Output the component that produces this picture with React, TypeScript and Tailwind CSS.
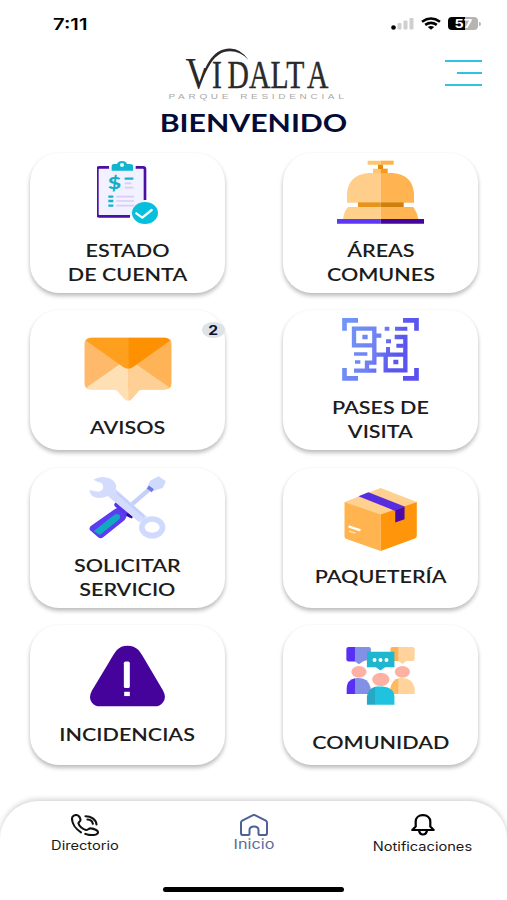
import type { ReactNode } from "react";
import clsx from "clsx";

interface Tile {
  id: string;
  lines: string[];
  icon: ReactNode;
  pad: string;
  gap: string;
  badge?: number;
}

function StatementIcon() {
  return (
    <svg width="62" height="63" viewBox="232 48 186 189" fill="none">
      <rect x="233" y="67" width="144" height="147" rx="6" fill="#f1f1ff" />
      <path d="M268 67h-29q-6 0-6 6v135q0 6 6 6h92M348 67h22q6 0 6 6v92" stroke="#4a0fa3" strokeWidth="8" />
      <path d="M276 77V63q0-6 7-6h9q3-9 15-9t15 9h9q9 0 9 6v14z" fill="#10b6cf" />
      <circle cx="307" cy="60" r="6" fill="#e6fbff" />
      <text x="264" y="133" fontFamily="Lato, sans-serif" fontWeight="900" fontSize="50" textLength="40" lengthAdjust="spacingAndGlyphs" fill="#12afc8">$</text>
      <path d="M315 101h26M266 155h15M266 168h15M266 182h15" stroke="#14b3cd" strokeWidth="7" />
      <path d="M315 115h20M315 128h26M290 155h53M290 168h53M290 182h53" stroke="#d9cdf5" strokeWidth="5" />
      <ellipse cx="376" cy="204" rx="39" ry="33" fill="#06bfdc" />
      <path d="M350 205l18 13 28-23" stroke="#fff" strokeWidth="7" strokeLinecap="round" strokeLinejoin="round" />
    </svg>
  );
}

function BellDeskIcon() {
  return (
    <svg width="87" height="64" viewBox="186 46 261 192">
      <path d="M278 48h39v12h-39zM294 72h23v16h-23z" fill="#ffc56f" />
      <path d="M317 48h39v12h-39z" fill="#ffb247" />
      <path d="M317 72h21v16h-21z" fill="#f59a1b" />
      <path d="M309 60h15v13h-15z" fill="#e58a0b" />
      <path d="M317 85h-36q-62 6-65 62v27h101z" fill="#ffce8a" />
      <path d="M317 85h36q61 6 64 62v27H317z" fill="#ffb351" />
      <path d="M249 173h68v14h-68z" fill="#e8931b" />
      <path d="M317 173h69v14h-69z" fill="#cf7f0b" />
      <path d="M219 187h98v36H204q3-24 15-36z" fill="#ffcf8c" />
      <path d="M317 187h98q11 15 15 36H317z" fill="#ffb554" />
      <path d="M186 223h131v14H186z" fill="#5c37f4" />
      <path d="M317 223h130v14H317z" fill="#44069b" />
    </svg>
  );
}

function EnvelopeIcon() {
  return (
    <svg width="88" height="64" viewBox="191 98 263 192">
      <path d="M192 119q0-19 19-19h112v155H211q-19 0-19-19z" fill="#ffb96a" />
      <path d="M323 100h111q19 0 19 19v117q0 19-19 19H323z" fill="#ffb357" />
      <path d="M199 249l104-73 20-6v119q-7 0-12-6l-21-23q-4-4-10-4h-67q-8 0-14-7z" fill="#ffdfb4" />
      <path d="M446 249l-104-73-19-6v119q7 0 12-6l20-23q4-4 10-4h67q8 0 14-7z" fill="#ffd095" />
      <path d="M197 109q5-9 16-9h110v93q-8 0-15-5z" fill="#ff9f1e" />
      <path d="M448 109q-5-9-16-9H323v93q8 0 15-5z" fill="#fd9102" />
    </svg>
  );
}

function QrIcon() {
  return (
    <svg width="77" height="63" viewBox="201 40 231 189" fill="none" stroke="url(#qr)" strokeWidth="13">
      <defs>
        <linearGradient id="qr" gradientUnits="userSpaceOnUse" x1="201" y1="80" x2="432" y2="170">
          <stop offset="0" stopColor="#7196f8" />
          <stop offset=".45" stopColor="#6f80f4" />
          <stop offset=".7" stopColor="#5b57ee" />
          <stop offset="1" stopColor="#5a50f0" />
        </linearGradient>
      </defs>
      <path d="M208.500 78V47H249M384 47h40.500v31M208.500 190v31H249M384 221h40.500v-31" strokeWidth="14" />
      <path d="M237 72h61v50h-61zM298 93h21M298 116v58h-22v22M237 198h67" />
      <path d="M237 148h40M240 172h16" strokeWidth="11" />
      <path d="M298 150h94M332 150v47h59v-47M391 203V97h-32" />
      <path d="M360 72h37M329 72h14M333 110h15M339 127v22M364 123h22" strokeWidth="12" />
      <path d="M262 97h16M355 172h15" />
    </svg>
  );
}

function ToolsIcon() {
  return (
    <svg width="77" height="63" viewBox="207 46 230 189" fill="none">
      <path d="M325 140l62-54" stroke="#c5d1fb" strokeWidth="13" />
      <path d="M382 78l8-18 25-13 22 15-9 20-28 8z" fill="#cedafc" />
      <path d="M383 79l15 11" stroke="#6d78e5" strokeWidth="11" />
      {/* handle */}
      <path d="M209 208q-3-8 4-13l66-46q10-8 22-10l20 18q-2 18-12 25l-60 48q-8 6-15 0z" fill="#5d3bf3" />
      <path d="M221 211l57-45q11-11 20-3 6 7-4 16l-55 44z" fill="#0faabf" />
      <path d="M290 132l40 31" stroke="#5734e5" strokeWidth="15" strokeLinecap="round" />
      <path d="M320 160l18 8" stroke="#34069a" strokeWidth="12" />
      {/* wrench */}
      <path d="M219 57q25-15 52-3 21 12 16 32l93 82-23 17-94-79q-23 10-41 3-14-7-14-21l27 5q15-3 14-16-2-11-13-12z" fill="#d3dcfd" />
      <path d="M290 96l82 72" stroke="#c3cffb" strokeWidth="6" />
      <ellipse cx="396" cy="200" rx="31" ry="25" stroke="#d0dafd" strokeWidth="17" />
    </svg>
  );
}

function ParcelIcon() {
  return (
    <svg width="73" height="63" viewBox="207 83 219 190">
      <path d="M208 125l109-42 109 42-109 40z" fill="#ffd08f" />
      <path d="M208 125l109 38v110l-103-36q-6-2-6-8z" fill="#ffb44f" />
      <path d="M426 125l-109 38v110l103-38q6-2 6-8z" fill="#ff950a" />
      <path d="M250 108l30-12 109 43-28 13z" fill="#582cdf" />
      <path d="M361 151l28-12v38l-28 10z" fill="#4a0aa6" />
      <path d="M220 199l36 12" stroke="#fff" strokeWidth="7" />
      <path d="M221 213l20 6" stroke="#ffe4bd" strokeWidth="4" />
    </svg>
  );
}

function WarningIcon() {
  return (
    <svg width="75" height="62" viewBox="209 77 226 185">
      <path d="M290 91q12-13 32-13t33 13q8 9 26 41l48 81q12 22-1 37-8 11-24 11H239q-16 0-24-11-12-15 0-37l49-81q18-32 26-41z" fill="#45039b" />
      <rect x="311" y="126" width="18" height="80" rx="5" fill="#fff" />
      <rect x="312" y="217" width="17" height="13" fill="#fff" />
    </svg>
  );
}

function CommunityIcon() {
  return (
    <svg width="69" height="58" viewBox="213 82 206 175">
      <path d="M213 88q0-6 7-6h19v44h-19q-7 0-7-6z" fill="#592ff3" />
      <path d="M239 82h42q6 0 6 6v34h-14l-10 4-12 8-12-8z" fill="#8290e6" />
      <path d="M346 88q0-6 6-6h19v42h-12l-13-3z" fill="#ffb24f" />
      <path d="M371 82h41q7 0 7 6v30q0 6-7 6h-18l-12 9-11-8z" fill="#ffd39b" />
      <ellipse cx="251" cy="157" rx="23" ry="18" fill="#fdb1a3" />
      <ellipse cx="382" cy="157" rx="23" ry="18" fill="#fdb1a3" />
      <path d="M239 176q-25 5-25 31v17h25z" fill="#592ff3" />
      <path d="M239 176q40-4 47 28v20h-47z" fill="#8290e6" />
      <path d="M371 176q-19 4-25 28v20h25z" fill="#ffb95f" />
      <path d="M371 176q42-3 48 29v19h-48z" fill="#ffd39b" />
      <path d="M275 96h83v47h-28l-14 10-14-10h-27z" fill="#1eb7cf" />
      <circle cx="298" cy="121" r="6" fill="#fff" />
      <circle cx="316" cy="121" r="6" fill="#fff" />
      <circle cx="334" cy="121" r="6" fill="#fff" />
      <ellipse cx="317" cy="180" rx="28" ry="22" fill="#fff" />
      <ellipse cx="317" cy="180" rx="26" ry="20" fill="#fdb1a3" />
      <path d="M302 201q-27 6-27 32v23h27z" fill="#27a9c6" />
      <path d="M302 201h20q36 3 36 32v23h-56z" fill="#1fc3df" />
    </svg>
  );
}

const tiles: Tile[] = [
  { id: "estado", lines: ["ESTADO", "DE CUENTA"], icon: <StatementIcon />, pad: "pt-[8px]", gap: "mt-[15px]" },
  { id: "areas", lines: ["ÁREAS", "COMUNES"], icon: <BellDeskIcon />, pad: "pt-[7px]", gap: "mt-[15px]" },
  { id: "avisos", lines: ["AVISOS"], icon: <EnvelopeIcon />, pad: "pt-[27px]", gap: "mt-[15px]", badge: 2 },
  { id: "pases", lines: ["PASES DE", "VISITA"], icon: <QrIcon />, pad: "pt-[8px]", gap: "mt-[15px]" },
  { id: "servicio", lines: ["SOLICITAR", "SERVICIO"], icon: <ToolsIcon />, pad: "pt-[8px]", gap: "mt-[15px]" },
  { id: "paqueteria", lines: ["PAQUETERÍA"], icon: <ParcelIcon />, pad: "pt-[20px]", gap: "mt-[14px]" },
  { id: "incidencias", lines: ["INCIDENCIAS"], icon: <WarningIcon />, pad: "pt-[20px]", gap: "mt-[16px]" },
  { id: "comunidad", lines: ["COMUNIDAD"], icon: <CommunityIcon />, pad: "pt-[22px]", gap: "mt-[26px]" },
];

function StatusBar() {
  return (
    <div className="flex h-[47px] items-center justify-between pr-[26px] pl-[53px]">
      <span className="origin-left scale-x-[1.26] font-['Inter',sans-serif] text-[16px] leading-none font-semibold text-black">
        7:11
      </span>
      <div className="flex items-center gap-[7px]">
        <svg width="23" height="13" viewBox="0 0 23 13">
          <circle cx="2.5" cy="10.5" r="2.3" />
          <g fill="#cfcfcf">
            <rect x="6.5" y="6" width="4" height="6.5" rx="1" />
            <rect x="12.5" y="3.5" width="4" height="9" rx="1" />
            <rect x="18.5" y="1" width="4" height="11.5" rx="1" />
          </g>
        </svg>
        <svg width="20" height="13" viewBox="0 0 20 13" fill="none" stroke="#000" strokeWidth="2.6">
          <path d="M1 4.700Q10-1.700 19 4.700M4.200 7.900q5.800-4.200 11.600 0" />
          <path d="M6.800 10q3.200-2.200 6.400 0L10 12.700z" fill="#000" stroke="none" />
        </svg>
        <div className="flex items-center gap-px">
          <div className="flex h-[13px] w-[30px] items-center justify-center rounded-[4px] bg-linear-to-r from-black from-57% to-[#b4b4b4] to-57% font-['Inter',sans-serif] text-[12px] leading-none font-bold text-white">
            <span className="scale-x-[1.2]">57</span>
          </div>
          <div className="h-[4px] w-[2px] rounded-r-full bg-[#b4b4b4]" />
        </div>
      </div>
    </div>
  );
}

function Logo() {
  return (
    <svg width="187" height="54" viewBox="160 47 187 54" fontFamily="'Liberation Serif', serif" fill="#2a2a2a">
      <clipPath id="v-arm">
        <path d="M180 50h20v18h9L200 92h-20z" />
      </clipPath>
      <text x="185.500" y="88" fontSize="44" textLength="26" lengthAdjust="spacingAndGlyphs" clipPath="url(#v-arm)">V</text>
      <path d="M198 87C204.500 69 211 48.500 230 48.500q11 0 18.500 11.500Q241 51.200 230 51.200C213 51.200 207 70 199.300 87z" />
      <g transform="translate(212 88) scale(.76 1)">
        <text x="0 20.400 48.700 77 97.700 125" y="0" fontSize="39" stroke="#2a2a2a" strokeWidth=".4">
          IDALTA
        </text>
      </g>
      <text x="168.500" y="99.300" fontFamily="'Liberation Sans', sans-serif" fontSize="6.500" letterSpacing="2.400" wordSpacing="1" textLength="179" lengthAdjust="spacingAndGlyphs" fill="#a9a9a9">
        PARQUE RESIDENCIAL
      </text>
    </svg>
  );
}

function TileCard({ tile }: { tile: Tile }) {
  return (
    <button
      type="button"
      className={clsx(
        "relative flex h-[140px] w-[195px] flex-col items-center rounded-[29px] bg-white shadow-[0_3px_4px_rgba(0,0,0,0.24),0_1px_4px_rgba(0,0,0,0.05)]",
        tile.pad
      )}
    >
      {tile.icon}
      <span
        className={clsx(
          "scale-x-[1.23] font-['Lato',sans-serif] text-[17.500px] leading-[24px] font-semibold whitespace-nowrap text-[#1c1c1c]",
          tile.gap
        )}
      >
        {tile.lines.map((line) => (
          <span key={line} className="block">
            {line}
          </span>
        ))}
      </span>
      {tile.badge && (
        <span className="absolute top-[12px] right-0 flex h-[16px] w-[23px] items-center justify-center rounded-[50%] bg-[#dfe3e6] font-['Inter',sans-serif] text-[13px] leading-none font-bold text-[#0c1338]">
          <span className="scale-x-[1.2]">{tile.badge}</span>
        </span>
      )}
    </button>
  );
}

function BottomNav() {
  return (
    <nav className="flex h-[99px] flex-col rounded-t-[38px] bg-white shadow-[0_-2px_5px_rgba(0,0,0,0.17)]">
      <div className="grid h-[86px] grid-cols-3 font-['Inter',sans-serif] text-[12.500px] leading-[16px] text-[#1a1a1a]">
        <a className="flex flex-col items-center pt-[13px]">
          <svg width="28" height="22" viewBox="0 0 28 22" fill="none" stroke="#111" strokeWidth="2.1" strokeLinecap="round" strokeLinejoin="round">
            <path d="M10 18.300C5 15.200 1 9.800 1 4.700 1 2.500 3 1 5.200 1 7.700 1 9.500 4 9.500 6c0 1.500-2.300 2.300-2 3.500.6 2.500 4.300 6 7.500 6.500 2 .3 2.500-2 5-1.600 3 .4 7 2 7 3.800 0 2.200-4 2.900-6.500 2.900-2.200 0-4.200-.4-6.200-1.200" />
            <path d="M14.500 2.200c5.500 0 10.500 3.300 11 8.300M16.500 5.500c2.800.2 5 1.800 5.300 4.300" />
          </svg>
          <span className="mt-[2px] scale-x-[1.17]">Directorio</span>
        </a>
        <a className="flex flex-col items-center pt-[13px] text-[13.500px] text-[#5a6b9c]">
          <svg width="28" height="22" viewBox="0 0 28 22" fill="none" stroke="#4f6296" strokeWidth="2" strokeLinejoin="round">
            <path d="M1 8.500Q1 7.300 2.200 6.600L12.600 1.300q1.400-.7 2.800 0l10.400 5.300Q27 7.300 27 8.500v10.700q0 1.800-2 1.800h-5.500q-1 0-1-1v-4c0-2.300-2-3.600-4.500-3.600s-4.500 1.300-4.500 3.600v4q0 1-1 1H3q-2 0-2-1.800z" />
          </svg>
          <span className="scale-x-[1.2]">Inicio</span>
        </a>
        <a className="flex flex-col items-center pt-[13px]">
          <svg width="24" height="22" viewBox="0 0 24 22" fill="none" stroke="#000" strokeWidth="2.2" strokeLinejoin="round">
            <path d="M12 1.200C7.500 1.200 4.700 3.800 4.700 7.500v5L1.300 16h21.400l-3.400-3.500v-5C19.300 3.800 16.500 1.200 12 1.200z" />
            <path d="M8 16.500c.5 2.700 2 4 4 4s3.500-1.300 4-4" />
          </svg>
          <span className="mt-[3px] scale-x-[1.17]">Notificaciones</span>
        </a>
      </div>
      <div className="mx-auto h-[5px] w-[181px] rounded-full bg-black" />
    </nav>
  );
}

export default function App() {
  return (
    <div className="flex h-[900px] w-[507px] flex-col overflow-hidden bg-white">
      <StatusBar />
      <header className="grid grid-cols-[1fr_auto_1fr] items-start">
        <span />
        <Logo />
        <button type="button" aria-label="Menú" className="flex flex-col items-end gap-[10px] pt-[13px] pr-[25px]">
          <span className="h-[2px] w-[37px] bg-[#2cc4de]" />
          <span className="h-[2px] w-[25px] bg-[#2cc4de]" />
          <span className="h-[2px] w-[37px] bg-[#2cc4de]" />
        </button>
      </header>
      <h1 className="mt-[7px] text-center font-['Lato',sans-serif] text-[24px] leading-[30px] font-bold text-[#020c36]">
        <span className="inline-block scale-x-[1.26]">BIENVENIDO</span>
      </h1>
      <main className="mt-[15px] grid grid-cols-[195px_195px] justify-center gap-x-[58px] gap-y-[17.400px] pl-px">
        {tiles.map((tile) => (
          <TileCard key={tile.id} tile={tile} />
        ))}
      </main>
      <div className="mt-auto">
        <BottomNav />
      </div>
    </div>
  );
}
